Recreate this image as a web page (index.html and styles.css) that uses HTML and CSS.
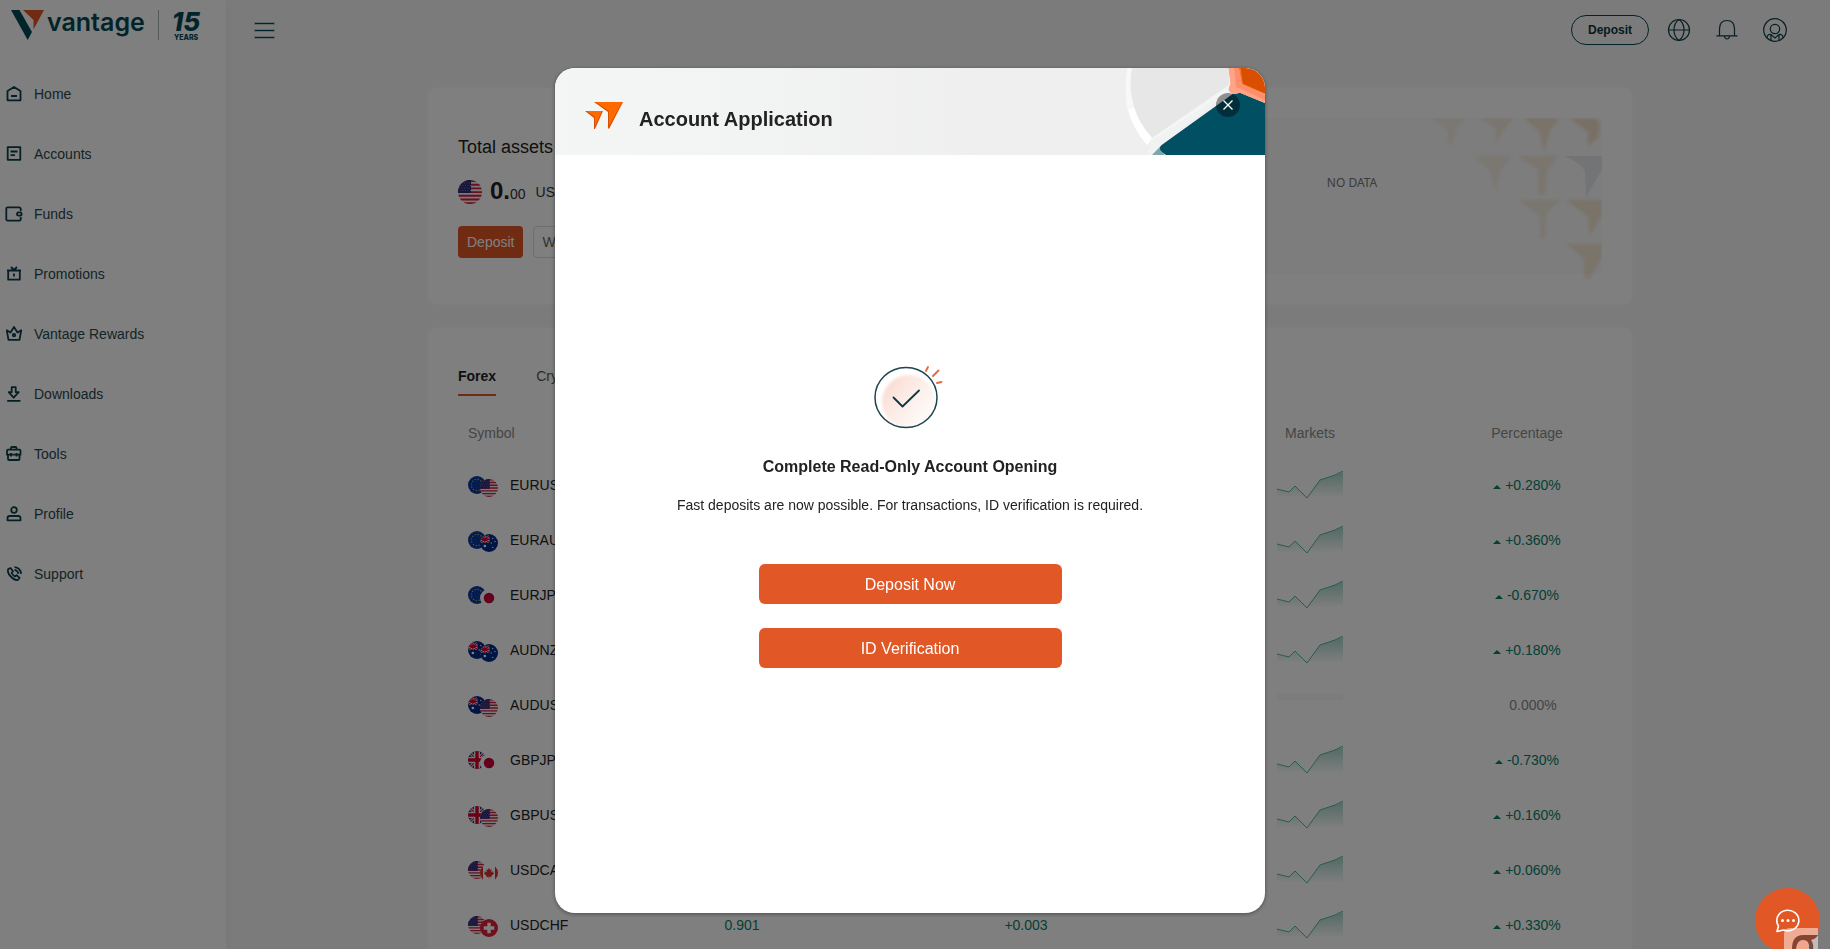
FILE: index.html
```html
<!DOCTYPE html>
<html lang="en">
<head>
<meta charset="utf-8">
<title>Vantage</title>
<link rel="stylesheet" href="styles.css">
</head>
<body>
<svg class="defs" aria-hidden="true">
  <defs>
    <linearGradient id="up" x1="0" y1="0" x2="0" y2="1"><stop offset="0" stop-color="#0a8a6c" stop-opacity=".36"/><stop offset="1" stop-color="#0a8a6c" stop-opacity="0"/></linearGradient>
    <filter id="fade"><feGaussianBlur stdDeviation="1.5"/></filter>
    <clipPath id="round"><circle cx="12" cy="12" r="12"/></clipPath>
    <symbol id="us" viewBox="0 0 24 24"><g clip-path="url(#round)"><path fill="#f4f0f0" d="M0 0h24v24H0z"/><path stroke="#d02040" stroke-width="1.9" d="M0 1h24M0 4.700h24M0 8.400h24M0 12.100h24M0 15.800h24M0 19.500h24M0 23.200h24"/><path fill="#2e2a78" d="M0 0h13v13H0z"/><path stroke="#8f8cc0" stroke-dasharray="1 1.500" stroke-width=".8" d="M1 3h12M2 5.500h11M1 8h12M2 10.500h11"/></g></symbol>
    <symbol id="eu" viewBox="0 0 24 24"><circle cx="12" cy="12" r="12" fill="#0a3a9c"/><circle cx="12" cy="12" r="7.500" fill="none" stroke="#d8c040" stroke-width="1.500" stroke-dasharray="1.400 2.527"/></symbol>
    <symbol id="au" viewBox="0 0 24 24"><g clip-path="url(#round)"><path fill="#002a86" d="M0 0h24v24H0z"/><path stroke="#fff" stroke-width="3" d="M0 7h13M6.500 2v10M1 3l11 8M12 3L1 11"/><path stroke="#d80030" stroke-width="1.700" d="M0 7h13M6.500 2v10M1 3l11 8M12 3L1 11"/><circle cx="6.500" cy="16" r="1.800" fill="#fff"/><g fill="#dde"><circle cx="17" cy="6" r="1"/><circle cx="20" cy="10" r="1"/><circle cx="15" cy="12" r="1"/><circle cx="17" cy="18" r="1"/></g></g></symbol>
    <symbol id="jp" viewBox="0 0 24 24"><circle cx="12" cy="12" r="12" fill="#fff"/><circle cx="12" cy="12" r="7" fill="#c8003a"/></symbol>
    <symbol id="gb" viewBox="0 0 24 24"><g clip-path="url(#round)"><path fill="#0d3a90" d="M0 0h24v24H0z"/><path stroke="#eee" stroke-width="4" d="M0 0l24 24M24 0L0 24"/><path stroke="#d80027" stroke-width="1.500" d="M0 0l24 24M24 0L0 24"/><path stroke="#eee" stroke-width="8" d="M0 12h24M12 0v24"/><path stroke="#d80027" stroke-width="4.500" d="M0 12h24M12 0v24"/></g></symbol>
    <symbol id="ca" viewBox="0 0 24 24"><g clip-path="url(#round)"><path fill="#fff" d="M0 0h24v24H0z"/><path fill="#d83030" d="M0 0h4v24H0zM20 0h4v24h-4zM12 5l1.500 3 2-1-.5 4 3-1.500-.5 2.500 1.500.5-4 3.500.3 1.500-3-.4V20h-.6v-2.900l-3 .4.300-1.500L5 12.500l1.500-.5L6 9.500 9 11l-.5-4 2 1z"/></g></symbol>
    <symbol id="ch" viewBox="0 0 24 24"><circle cx="12" cy="12" r="12" fill="#e0203c"/><path stroke="#fff" stroke-width="4.500" d="M12 5v14M5 12h14"/></symbol>
    <symbol id="chart" viewBox="0 0 66 28"><path fill="url(#up)" d="M0 18l12 3 6-6 12 12L43 9l15-5 8-3v26H0z"/><path fill="none" stroke="#4fb8a2" stroke-width="1" d="M0 18l12 3 6-6 12 12L43 9l15-5 8-4"/></symbol>
  </defs>
</svg>

<div class="app">
  <aside class="sidebar">
    <a class="logo" href="#" aria-label="Vantage 15 years">
      <svg width="34" height="30" viewBox="0 0 34 30"><path fill="#034854" d="M0 0h8.500L21 22l-4.300 8z"/><path fill="#e15726" d="M12 0h21L22.500 19.500V10z"/></svg>
      <span class="wordmark">vantage</span>
      <span class="logo-rule"></span>
      <span class="anniv"><span class="anniv-num">15</span><span class="anniv-text">YEARS</span></span>
    </a>
    <nav class="menu">
      <a href="#"><svg viewBox="0 0 16 16"><path d="M1.500 5 8 1l6.500 4v9.300h-13zM5 10h6"/></svg>Home</a>
      <a href="#"><svg viewBox="0 0 16 16"><path d="M1.700 1.200h12.600v12.600H1.700zM4.500 5.500h7M4.500 9.200h4.500"/></svg>Accounts</a>
      <a href="#"><svg viewBox="0 0 16 16"><path d="M14.800 5V3.200q0-1.900-1.900-1.900H1.800q-1.500 0-1.500 1.500v10.400q0 1.500 1.500 1.500h11.100q1.900 0 1.900-1.900V11"/><rect x="11" y="6.400" width="4.600" height="3.200" rx="1.600"/></svg>Funds</a>
      <a href="#"><svg viewBox="0 0 16 16"><path d="M1 4.500h14M2.200 4.500v9.200h11.600V4.500M5 1l3 3 3-3M8 7.500v3"/></svg>Promotions</a>
      <a href="#"><svg viewBox="0 0 16 16"><path d="M.8 4.300 4.500 6.500 8 1l3.500 5.500 3.700-2.200-1.700 9.500h-11z"/><circle cx="8" cy="9.200" r="1.200"/></svg>Vantage Rewards</a>
      <a href="#"><svg viewBox="0 0 16 16"><path d="M5.700 1.200h4v5h3L7.700 11.700 2.700 6.200h3zM1.200 14.800h13.200"/></svg>Downloads</a>
      <a href="#"><svg viewBox="0 0 16 16"><path d="M5 3.700V2q0-1 1-1h3.500q1 0 1 1v1.700M2 3.700h11.500q1 0 1 1v4H1v-4q0-1 1-1zM2 8.700V13q0 1 1 1h9.500q1 0 1-1V8.700M5 7v3.500M10.500 7v3.500"/></svg>Tools</a>
      <a href="#"><svg viewBox="0 0 16 16"><circle cx="8" cy="4" r="2.800"/><path d="M1.500 14.300v-2q0-2.300 2.300-2.300h8.400q2.300 0 2.300 2.300v2z"/></svg>Profile</a>
      <a href="#"><svg viewBox="0 0 16 16"><path d="M4.500 2 2.200 3C.6 7 6.500 14.500 11.800 14l1.800-2-3-2.800-1.800 1.200Q6.500 9 5.600 7L7 5.300zM8.500 3.800q3.300.5 4 4M8.500 1.200q6 .5 6.600 6.600"/></svg>Support</a>
    </nav>
  </aside>

  <div class="page">
    <header class="topbar">
      <button class="burger" aria-label="Menu"><span></span><span></span><span></span></button>
      <div class="actions">
        <button class="pill">Deposit</button>
        <button class="icon" aria-label="Language"><svg viewBox="0 0 24 24"><circle cx="12" cy="12" r="10.500"/><path d="M12 1.500q-5 3.500-5 10.500t5 10.500q5-3.500 5-10.500t-5-10.500M1.500 12h21"/></svg></button>
        <button class="icon" aria-label="Notifications"><svg viewBox="0 0 24 24"><path d="M1.500 17.800h21M4.500 17.500V11q0-8.500 7.500-8.500t7.500 8.500v6.500M9.500 18.500q.5 2.500 2.500 2.500t2.500-2.500"/></svg></button>
        <button class="icon" aria-label="Account"><svg viewBox="0 0 24 24"><circle cx="12" cy="12" r="11.300"/><circle cx="12" cy="11" r="4.700"/><path d="M4 20q0-4 4-3.500l4 3.500 4-3.500q4-.5 4 3.500M8 17v5M16 17v5"/></svg></button>
      </div>
    </header>

    <main class="content">
      <section class="card assets">
        <div class="balance">
          <h2>Total assets</h2>
          <div class="amount">
            <svg class="flag-lg"><use href="#us"/></svg>
            <span><strong>0.</strong>00</span><span>USD</span>
          </div>
          <div class="buttons"><button class="fill">Deposit</button><button class="line">Withdraw</button></div>
        </div>
        <div class="nodata">
          <span>NO DATA</span>
          <svg class="pattern" viewBox="0 0 170 162">
            <g fill="#e8c490" filter="url(#fade)">
              <path opacity=".2" d="M0 0h34L24 10l-3 16h-5V12z"/><path opacity=".28" d="M48 0h34L72 11l-8 15V11z"/><path opacity=".38" d="M92 0h35l-9 13-6 21-5-21z"/><path opacity=".45" d="M138 0h26l4 6-2 14-10 8V14z"/>
              <path opacity=".22" d="M42 38h38L68 52l-5 20-5-20z"/><path opacity=".28" d="M86 38h41l-12 14-2 24h-7V52z"/>
              <path opacity=".24" d="M86 82h42l-14 14-1 24h-5V98z"/><path opacity=".38" d="M134 82h36v14l-12 22-2-20z"/>
              <path opacity=".34" d="M134 126h36v12l-12 22h-6v-20z"/>
            </g>
            <path fill="#e6e8ea" d="M132 38h38v13l-16 28-1-26q-4-8-21-15z"/>
          </svg>
        </div>
      </section>

      <section class="card market">
        <div class="tabs"><button class="on">Forex</button><button>Crypto</button></div>
        <table>
          <colgroup><col class="c-sym"><col><col><col><col class="c-pct"></colgroup>
          <thead><tr><th>Symbol</th><th></th><th></th><th>Markets</th><th>Percentage</th></tr></thead>
          <tbody>
            <tr><td><div class="sym"><span class="flags"><svg><use href="#eu"/></svg><svg><use href="#us"/></svg></span>EURUSD</div></td><td></td><td></td><td><svg class="chart"><use href="#chart"/></svg></td><td><span class="pct">+0.280%</span></td></tr>
            <tr><td><div class="sym"><span class="flags"><svg><use href="#eu"/></svg><svg><use href="#au"/></svg></span>EURAUD</div></td><td></td><td></td><td><svg class="chart"><use href="#chart"/></svg></td><td><span class="pct">+0.360%</span></td></tr>
            <tr><td><div class="sym"><span class="flags"><svg><use href="#eu"/></svg><svg><use href="#jp"/></svg></span>EURJPY</div></td><td></td><td></td><td><svg class="chart"><use href="#chart"/></svg></td><td><span class="pct">-0.670%</span></td></tr>
            <tr><td><div class="sym"><span class="flags"><svg><use href="#au"/></svg><svg><use href="#au"/></svg></span>AUDNZD</div></td><td></td><td></td><td><svg class="chart"><use href="#chart"/></svg></td><td><span class="pct">+0.180%</span></td></tr>
            <tr><td><div class="sym"><span class="flags"><svg><use href="#au"/></svg><svg><use href="#us"/></svg></span>AUDUSD</div></td><td></td><td></td><td><svg class="chart" viewBox="0 0 66 28"><path fill="#f8f8f8" d="M0 3h66v6H0z"/></svg></td><td><span class="pct flat">0.000%</span></td></tr>
            <tr><td><div class="sym"><span class="flags"><svg><use href="#gb"/></svg><svg><use href="#jp"/></svg></span>GBPJPY</div></td><td></td><td></td><td><svg class="chart"><use href="#chart"/></svg></td><td><span class="pct">-0.730%</span></td></tr>
            <tr><td><div class="sym"><span class="flags"><svg><use href="#gb"/></svg><svg><use href="#us"/></svg></span>GBPUSD</div></td><td></td><td></td><td><svg class="chart"><use href="#chart"/></svg></td><td><span class="pct">+0.160%</span></td></tr>
            <tr><td><div class="sym"><span class="flags"><svg><use href="#us"/></svg><svg><use href="#ca"/></svg></span>USDCAD</div></td><td></td><td></td><td><svg class="chart"><use href="#chart"/></svg></td><td><span class="pct">+0.060%</span></td></tr>
            <tr><td><div class="sym"><span class="flags"><svg><use href="#us"/></svg><svg><use href="#ch"/></svg></span>USDCHF</div></td><td class="up">0.901</td><td class="up">+0.003</td><td><svg class="chart"><use href="#chart"/></svg></td><td><span class="pct">+0.330%</span></td></tr>
          </tbody>
        </table>
      </section>
    </main>
  </div>
</div>

<div class="overlay">
  <div class="modal" role="dialog" aria-modal="true" aria-labelledby="dlg-title">
    <div class="modal-head">
      <svg class="art" viewBox="135 24 420 261" aria-hidden="true">
        <path fill="#f8f8f8" d="M142 24h14q-12 60 6 115 16 50 54 95l-14 22q-46-54-60-110-10-50 0-122z"/>
        <path fill="#fff" d="M144 148l18-4q16 48 54 90l-14 22q-44-50-58-108z"/>
        <path fill="#e7e7e7" d="M156 24h290v58L218 234q-40-40-56-95-16-60-6-115z"/>
        <path fill="#f1f2f2" d="M450 72v20L240 258l-24 27h-14l14-51z"/>
        <path fill="none" stroke="#fff" stroke-width="2" d="M446 86L218 236"/>
        <path fill="#7ba6ae" d="M240 260l-24 25h38z"/>
        <path fill="#004f63" d="M244 256L458 102q10-8 22-4l75 31v156H258q-28-18-14-29z"/>
        <path fill="#ff8f6c" d="M446 24h34l6 48 69 32v25l-75-31-14 4q-16 0-20-14l6-18z"/>
        <path fill="#ffa486" d="M446 24h16l6 56 87 40v9l-75-31-14 4q-16 0-20-14l6-18z"/>
        <path fill="#d94e00" d="M478 24h77v78l-68-30z"/>
        <path fill="none" stroke="#ff7a1e" stroke-width="3" d="M480 24l7 48 68 30"/>
      </svg>
      <svg class="arrows" viewBox="0 0 38 28" aria-hidden="true"><path fill="#d85000" d="M9 0h29L24 27l-1-1V10zM0 9h18L10 27H9V16z"/><path fill="#ff6a00" d="M11 0h26L24 24V9zM2 9h15l-7 15v-9z"/></svg>
      <h1 id="dlg-title">Account Application</h1>
      <button class="close" aria-label="Close"><svg viewBox="0 0 24 24"><path d="M7.500 7.500l9 9M16.500 7.500l-9 9"/></svg></button>
    </div>
    <div class="modal-body">
      <svg class="done" viewBox="0 0 72 64" aria-hidden="true">
        <defs><linearGradient id="glow" x1="0" y1="0" x2="1" y2=".8"><stop offset="0" stop-color="#f8d3c6"/><stop offset="1" stop-color="#fdf3ef" stop-opacity=".3"/></linearGradient><filter id="soft"><feGaussianBlur stdDeviation="1.500"/></filter><clipPath id="disc"><ellipse cx="32" cy="31.500" rx="31" ry="30"/></clipPath></defs>
        <g clip-path="url(#disc)"><circle cx="35" cy="36" r="27" fill="url(#glow)" filter="url(#soft)"/></g>
        <ellipse cx="32" cy="31.500" rx="31" ry="30" fill="none" stroke="#1c4550" stroke-width="1.500"/>
        <path fill="none" stroke="#0b3644" stroke-width="1.800" stroke-linecap="round" stroke-linejoin="round" d="M19.500 31.500l9 9 16.500-16"/>
        <path stroke="#e8683c" stroke-width="1.800" stroke-linecap="round" d="M52 5l2-4M59 10l5.500-5.500M63 17l4.500-1"/>
      </svg>
      <h2>Complete Read-Only Account Opening</h2>
      <p>Fast deposits are now possible. For transactions, ID verification is required.</p>
      <div class="cta"><button>Deposit Now</button><button>ID Verification</button></div>
    </div>
  </div>
</div>

<button class="chat" aria-label="Chat"><svg viewBox="0 0 26 26"><path fill="none" stroke="#fff" stroke-width="1.600" d="M2 23.500l1.500-5.500A11 10.300 0 1 1 8.500 22z" stroke-linejoin="round"/><g fill="#fff"><circle cx="7.500" cy="12.500" r="1.500"/><circle cx="13" cy="12.500" r="1.500"/><circle cx="18.500" cy="12.500" r="1.500"/></g></svg></button>
<svg class="mark" viewBox="0 0 34 21" aria-hidden="true"><path fill="#fff" opacity=".5" d="M6 0h28v21H0V6q0-6 6-6z"/><path fill="#6b2c1c" opacity=".8" d="M19 7h15q-2 4-7 5 3 4 2 9h-4q1-9-6-9-6 0-7 9H8Q8 7 19 7z"/><circle cx="19" cy="18" r="5" fill="#f2a58c"/></svg>
</body>
</html>
```

FILE: styles.css
```css
* { box-sizing: border-box; margin: 0; }
body { height: 100vh; overflow: hidden; background: #f6f6f6; color: #222; font: 14px/20px "Liberation Sans", Arial, sans-serif; }
button { font: inherit; border: 0; background: none; padding: 0; color: inherit; }
a { color: inherit; text-decoration: none; }
.defs { position: absolute; width: 0; height: 0; }

.app { display: flex; height: 100vh; overflow: hidden; }
.sidebar { flex: 0 0 226px; background: #fff; box-shadow: 0 0 12px rgba(0,0,0,.03); }
.logo { display: flex; align-items: flex-start; height: 64px; padding: 10px 0 0 11px; color: #034854; }
.wordmark { margin-left: 2px; font: 600 25px/25px Inter, sans-serif; }
.logo-rule { width: 1px; height: 30px; margin: 0 13px 0 13px; background: #a8b4b6; }
.anniv { display: flex; flex-direction: column; align-items: center; }
.anniv-num { font: italic 800 26px/24px Inter, sans-serif; }
.anniv-text { font: 800 7px/7px Inter, sans-serif; }
.menu a { display: flex; align-items: center; gap: 12px; height: 60px; padding-left: 6px; color: #2b474e; }
.menu svg { width: 16px; height: 16px; overflow: visible; fill: none; stroke: #0d3f48; stroke-width: 1.800; stroke-linejoin: round; }

.page { flex: 1; min-width: 0; }
.topbar { display: flex; justify-content: space-between; align-items: center; height: 60px; padding: 0 43px 0 29px; }
.burger { display: flex; flex-direction: column; gap: 6px; width: 19px; }
.burger span { height: 1px; background: #034854; outline: 1px solid rgba(3,72,84,.2); }
.actions { display: flex; align-items: center; gap: 24px; }
.pill { width: 78px; height: 30px; margin-right: -6px; border: 1px solid #034854; border-radius: 15px; color: #0e343d; font-size: 12px; font-weight: bold; }
.icon { width: 24px; height: 24px; }
.icon svg { display: block; width: 24px; height: 24px; fill: none; stroke: #0d3f48; stroke-width: 1.200; }

.content { display: flex; flex-direction: column; gap: 24px; padding: 28px 198px 0 202px; }
.card { padding: 30px; background: #fff; border-radius: 8px; box-shadow: 0 0 6px rgba(255,255,255,.8); }
.assets { display: flex; justify-content: space-between; height: 216px; }
.balance { display: flex; flex-direction: column; padding-top: 17px; }
.balance h2 { font-size: 18px; font-weight: normal; line-height: 24px; }
.amount { display: flex; align-items: center; gap: 8px; height: 32px; margin-top: 17px; color: #333; }
.amount span + span { margin-left: 2px; }
.amount strong { font-size: 24px; color: #222; }
.flag-lg { width: 24px; height: 24px; }
.buttons { display: flex; gap: 10px; margin-top: 18px; }
.buttons button { height: 32px; padding: 0 9px; border-radius: 4px; }
.fill { background: #e15726; color: #fff; }
.buttons .line { padding: 0 8px; border: 1px solid #ddd; color: #666; }
.nodata { position: relative; width: 500px; padding-top: 54px; background: #fafafa; text-align: center; color: #777; font: 12px/22px "Noto Sans", sans-serif; }
.pattern { position: absolute; right: 0; top: 0; width: 170px; height: 162px; }

.market { padding-bottom: 60px; }
.tabs { display: flex; gap: 40px; }
.tabs button { height: 38px; border-bottom: 2px solid transparent; color: #555; }
.tabs .on { border-color: #e15726; color: #222; font-weight: bold; }
table { width: 100%; margin-top: 13px; border-collapse: collapse; table-layout: fixed; text-align: center; }
.c-sym { width: 142px; }
.c-pct { width: 150px; }
th, td { padding: 0; }
th { height: 48px; color: #8a8a8a; font-weight: normal; }
td { height: 55px; }
th:first-child, td:first-child { padding-left: 10px; text-align: left; }
.sym { display: flex; align-items: center; gap: 12px; white-space: nowrap; }
.flags { display: flex; width: 30px; }
.flags svg { flex: 0 0 18px; height: 18px; }
.flags svg + svg { margin: 3px 0 0 -6px; }
.flags svg:last-child { margin-bottom: -3px; }
.chart { display: block; width: 66px; height: 28px; margin: 0 auto; }
.up, .pct { color: #08806a; }
.pct { display: inline-flex; align-items: center; gap: 4px; }
.pct::before { content: ""; margin-top: 4px; border: solid transparent; border-width: 0 4px 4px; border-bottom-color: currentColor; }
.pct.flat { color: #8a8a8a; }
.pct.flat::before { visibility: hidden; }

.overlay { position: fixed; inset: 0; padding: 68px 10px 36px 0; background: rgba(0,0,0,.5); }
.modal { width: 710px; margin: 0 auto; overflow: hidden; background: #fff; border-radius: 20px; box-shadow: 0 1px 4px rgba(0,0,0,.4); }
.modal-head { position: relative; display: flex; gap: 16px; height: 87px; padding: 34px 30px 0; background: linear-gradient(90deg, #f4f6f6, #efefef 60%); }
.modal-head h1 { font-size: 20px; line-height: 34px; color: #222; }
.arrows { width: 38px; height: 28px; }
.art { position: absolute; right: 0; top: 0; width: 140px; height: 87px; }
.close { position: absolute; right: 25px; top: 25px; width: 24px; height: 24px; border-radius: 50%; background: rgba(0,0,0,.4); }
.close svg { display: block; fill: none; stroke: #fff; stroke-width: 1.300; }
.modal-body { display: flex; flex-direction: column; align-items: center; padding: 211px 30px 245px; text-align: center; }
.done { width: 72px; height: 64px; }
.modal-body h2 { margin-top: 27px; font-size: 16px; line-height: 20px; }
.modal-body p { margin: 18px 0 49px; }
.cta { display: flex; flex-direction: column; gap: 24px; width: 303px; }
.cta button { height: 40px; padding-top: 2px; border-radius: 6px; background: #e15726; color: #fff; font-size: 16px; }

.chat { position: fixed; right: 10px; bottom: -4px; display: grid; place-items: center; width: 65px; height: 65px; border-radius: 50%; background: #e15726; }
.chat svg { width: 26px; height: 26px; }
.mark { position: fixed; right: 12px; bottom: 0; width: 34px; height: 21px; }
```
